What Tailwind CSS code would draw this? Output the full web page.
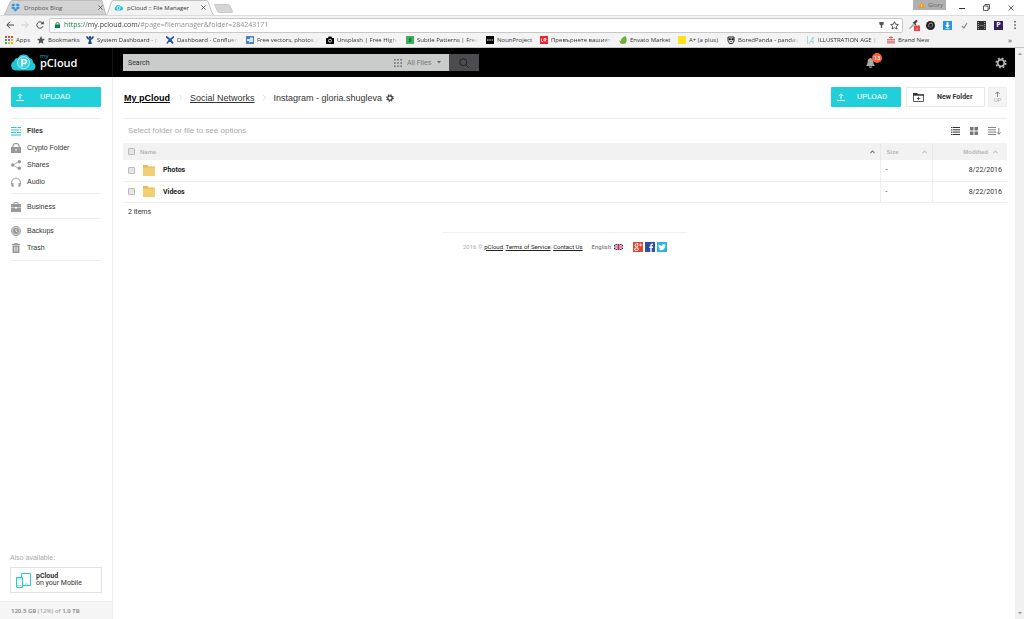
<!DOCTYPE html>
<html lang="en">
<head>
<meta charset="utf-8">
<title>pCloud :: File Manager</title>
<script src="https://cdn.jsdelivr.net/npm/@tailwindcss/browser@4"></script>
</head>
<body class="flex h-screen flex-col overflow-hidden bg-white font-['Liberation_Sans',Arial,sans-serif] text-[7px] leading-[10px] text-[#333]">

<!-- Browser chrome -->
<div class="shrink-0 font-['Open_Sans','Noto_Sans',sans-serif] text-[6px] text-[#333]">
  <div class="flex h-[15px] items-stretch pl-[4px]">
    <div class="relative flex w-[102px] items-center gap-[4px] pr-[3px] pl-[7px] text-[#555]">
      <svg class="absolute inset-0 h-full w-full" viewBox="0 0 102 15" preserveAspectRatio="none"><path d="M0 15C2 14 5 1 8 .5H98L102 15Z" fill="#d3d3d3" stroke="#aaa" stroke-width=".7"/></svg>
      <svg class="relative size-[9px]" viewBox="0 0 18 16" fill="#2a93e8"><path d="M5 0l4 3-5 3-4-3zM13 0l5 3-4 3-5-3zM0 9l4-3 5 3-4 3zM14 6l4 3-5 3-4-3zM5 13l4-3 4 3-4 3z"/></svg>
      <span class="relative flex-1">Dropbox Blog</span>
      <button aria-label="Close Dropbox Blog" class="relative"><svg class="size-[5px]" viewBox="0 0 6 6"><path d="M.5.5l5 5M5.500.5l-5 5" stroke="#555"/></svg></button>
    </div>
    <div class="relative flex w-[108px] items-center gap-[4px] pr-[8px] pl-[8px]">
      <svg class="absolute inset-0 h-full w-full" viewBox="0 0 108 15" preserveAspectRatio="none"><path d="M0 15C3 14 4 1 7 .5H101C103 1 105 14 108 15Z" fill="#f3f3f3"/><path d="M0 15C3 14 4 1 7 .5H101C103 1 105 14 108 15" fill="none" stroke="#aaa" stroke-width=".7"/></svg>
      <svg class="relative size-[9px]" viewBox="0 0 18 14"><path d="M4 13a4 4 0 0 1-1-7 6 6 0 0 1 11-1 4 4 0 0 1 0 8z" fill="#20c5d3"/><circle cx="9" cy="8" r="3" fill="none" stroke="#fff" stroke-width="1.500"/></svg>
      <span class="relative flex-1">pCloud :: File Manager</span>
      <button aria-label="Close pCloud" class="relative"><svg class="size-[5px]" viewBox="0 0 6 6"><path d="M.5.5l5 5M5.500.5l-5 5" stroke="#444"/></svg></button>
    </div>
    <button aria-label="New tab" class="mt-[4px] h-[9px] w-[19px]"><svg class="h-full w-full" viewBox="0 0 19 9"><path d="M.5 .5h14q1 0 1.500 1l2.500 6q.2 1-1 1H5q-1 0-1.500-1z" fill="#d5d5d5" stroke="#b5b5b5" stroke-width=".6"/></svg></button>
    <div class="flex-1"></div>
    <button class="mr-[13px] flex h-[10px] w-[33px] items-center gap-[3px] bg-[#b0b0b0] pl-[5px] text-[#666]">
      <svg class="h-[6px] w-[7px]" viewBox="0 0 12 11"><path d="M6 0l6 11H0z" fill="#f59a12"/><path d="M6 4v3M6 8v1.500" stroke="#fff"/></svg>Glory</button>
    <button aria-label="Minimize" class="mr-[18px]"><svg class="size-[6px]" viewBox="0 0 6 6"><path d="M0 3.500h6" stroke="#333"/></svg></button>
    <button aria-label="Restore" class="mr-[18px]"><svg class="size-[7px]" viewBox="0 0 7 7" fill="none" stroke="#333" stroke-width=".8"><path d="M.5 2h4.500v4.500H.5zM2 2V.5h4.500V5H5"/></svg></button>
    <button aria-label="Close window" class="mr-[10px]"><svg class="size-[6px]" viewBox="0 0 6 6"><path d="M.5.5l5 5M5.500.5l-5 5" stroke="#333" stroke-width=".8"/></svg></button>
  </div>

  <div class="flex h-[19px] items-center border-t border-[#ddd] bg-[#f3f3f3] pr-[8px] pl-[6px]">
    <button aria-label="Back" class="mr-[7px]"><svg class="size-[8px]" viewBox="0 0 8 8" fill="none" stroke="#444"><path d="M8 4H1M4 .7L.8 4 4 7.300"/></svg></button>
    <button aria-label="Forward" class="mr-[7px]"><svg class="size-[8px]" viewBox="0 0 8 8" fill="none" stroke="#ccc"><path d="M0 4h7M4 .7L7.200 4 4 7.300"/></svg></button>
    <button aria-label="Reload" class="mr-[5px]"><svg class="size-[8px]" viewBox="0 0 8 8" fill="none" stroke="#444"><path d="M7 5.200A3.200 3.200 0 1 1 6.300 1.800"/><path d="M7.800 0v3.300H4.500z" fill="#444" stroke="none"/></svg></button>
    <div class="flex h-[15px] flex-1 items-center rounded-[2px] border border-[#c8c8c8] bg-white pr-[3px] pl-[5px]">
      <svg class="mr-[4px] h-[6px] w-[5px]" viewBox="0 0 5 6"><path d="M0 2.500h5V6H0z" fill="#0b8043"/><path d="M1 3V1.700a1.500 1.300 0 0 1 3 0V3" fill="none" stroke="#0b8043" stroke-width=".8"/></svg>
      <input aria-label="Address" value="https://my.pcloud.com/#page=filemanager&amp;folder=284243171" class="min-w-0 flex-1 bg-[linear-gradient(90deg,#0b8043_23px,#333_23px,#333_75px,#888_75px)] bg-clip-text text-[7px] text-transparent outline-none">
      <svg class="mr-[6px] h-[6px] w-[5px]" viewBox="0 0 5 7" fill="#555"><path d="M0 0h5v2.500L3.300 4v3H1.700V4L0 2.500z"/></svg>
      <svg class="size-[9px]" viewBox="0 0 10 10"><path d="M5 .8l1.300 2.800 3 .3-2.200 2 .6 3L5 7.400 2.300 8.900l.6-3-2.200-2 3-.3z" fill="none" stroke="#444"/></svg>
    </div>
    <div class="flex items-center gap-[8px] pl-[6px]">
      <svg class="h-[12px] w-[9px] overflow-visible" viewBox="0 0 9 12"><path d="M0 9.500l4-4.500 1.200 1.200L.8 10z" fill="#999"/><path d="M3.500 3.500l3 3 .9-.9-.9-1L8.500 2.500 8 1 6.500 1.200 4.900 3z" fill="#444"/><path d="M5 6.500h6V12H5z" fill="#ec4146"/><path d="M7.300 10h1.500" stroke="#fff" stroke-width=".7"/></svg>
      <svg class="size-[9px]" viewBox="0 0 9 9"><circle cx="4.500" cy="4.500" r="4.500" fill="#222"/><path d="M2.800 3.200L5 2l1.500.7" stroke="#e8a33a" fill="none"/><path d="M6.500 3v2.500" stroke="#3aa757"/><path d="M6 6L3.500 6.500" stroke="#3b6fd8"/><path d="M2.700 6V3.500" stroke="#b45bd0"/></svg>
      <svg class="size-[9px]" viewBox="0 0 9 9"><path d="M0 0h9v9H0z" fill="#2a94df"/><path d="M3.500 1.300h2v3H7L4.500 6.800 2 4.300h1.500z" fill="#fff"/><path d="M2.500 7.600h4" stroke="#fff" stroke-width=".8"/></svg>
      <svg class="size-[9px]" viewBox="0 0 9 9"><path d="M2 5l2 2 3-5" fill="none" stroke="#888" stroke-width="1.200"/></svg>
      <svg class="size-[9px]" viewBox="0 0 9 9"><path d="M0 0h9v9H0z" fill="#333"/><path d="M1.300 1v7M7.700 1v7" stroke="#bbb" stroke-dasharray="1 1"/><path d="M2.500 4.500h4" stroke="#999" stroke-width=".6"/></svg>
      <span class="flex h-[9px] w-[9px] items-center justify-center bg-[#36205c] text-[7px] font-bold text-white">P</span>
      <button aria-label="Menu" class="pl-[3px]"><svg class="h-[8px] w-[2px]" viewBox="0 0 2 8" fill="#444"><path d="M.3 0h1.400v1.500H.3zM.3 3.200h1.400v1.500H.3zM.3 6.400h1.400v1.500H.3z"/></svg></button>
    </div>
  </div>

  <nav aria-label="Bookmarks" class="flex h-[14px] items-center overflow-hidden border-b border-[#c4c4c4] bg-[#f3f3f3] pb-[2px] pl-[5px] whitespace-nowrap">
    <a href="#" class="flex w-[32px] shrink-0 items-center gap-[3px]"><svg class="size-[8px]" viewBox="0 0 8 8"><path d="M0 0h2v2H0zM3 0h2v2H3zM6 0h2v2H6z" fill="#e5493a"/><path d="M0 3h2v2H0z" fill="#3aa757"/><path d="M3 3h2v2H3z" fill="#4285f4"/><path d="M6 3h2v2H6zM3 6h2v2H3zM6 6h2v2H6z" fill="#f4b400"/><path d="M0 6h2v2H0z" fill="#3aa757"/></svg>Apps</a>
    <a href="#" class="flex w-[49px] shrink-0 items-center gap-[3px]"><svg class="size-[8px]" viewBox="0 0 10 10"><path d="M5 0l1.500 3.400 3.500.4-2.600 2.400.7 3.600L5 8 1.900 9.800l.7-3.600L0 3.800l3.500-.4z" fill="#555"/></svg>Bookmarks</a>
    <a href="#" class="flex w-[80px] shrink-0 items-center gap-[3px]"><svg class="size-[8px]" viewBox="0 0 8 8"><circle cx="4" cy="1.600" r="1.500" fill="#234d80"/><path d="M0 .5C.5 3 2 3.500 3.200 4L2 8h4L4.800 4C6 3.500 7.500 3 8 .5L6.300.3Q6 3 4 3.300 2 3 1.700.3z" fill="#234d80"/></svg><span class="w-[61px] mask-r-from-85%">System Dashboard - p</span></a>
    <a href="#" class="flex w-[80px] shrink-0 items-center gap-[3px]"><svg class="size-[8px]" viewBox="0 0 8 8"><path d="M0 .5c2 2 4 2 7 7M8 .5C6 3 3 3 1 7.500" stroke="#23569c" stroke-width="1.800" fill="none"/></svg><span class="w-[61px] mask-r-from-85%">Dashboard - Confluen</span></a>
    <a href="#" class="flex w-[80px] shrink-0 items-center gap-[3px]"><svg class="size-[8px]" viewBox="0 0 8 8"><path d="M0 0h8v8H0z" fill="#4a82c4"/><path d="M1 5V3h3V1.500h3V6H4l-1 1V5z" fill="#d7e5f5"/></svg><span class="w-[61px] mask-r-from-85%">Free vectors, photos a</span></a>
    <a href="#" class="flex w-[80px] shrink-0 items-center gap-[3px]"><svg class="size-[8px]" viewBox="0 0 8 8"><path d="M0 2h2l.7-1.500h2.600L6 2h2v6H0z"/><circle cx="4" cy="4.700" r="1.500" fill="none" stroke="#fff" stroke-width=".8"/></svg><span class="w-[61px] mask-r-from-85%">Unsplash | Free High-</span></a>
    <a href="#" class="flex w-[80px] shrink-0 items-center gap-[3px]"><svg class="size-[8px]" viewBox="0 0 8 8"><path d="M0 0h8v8H0z" fill="#37b45b"/><path d="M5.500 2.500H3.500L3 4h2L4.500 5.500h-2" fill="none" stroke="#19592d" stroke-width=".8"/></svg><span class="w-[61px] mask-r-from-85%">Subtle Patterns | Free</span></a>
    <a href="#" class="flex w-[54px] shrink-0 items-center gap-[3px]"><svg class="size-[8px]" viewBox="0 0 8 8"><path d="M0 0h8v8H0z"/><path d="M1 4h1.500M3.300 4h1.500M5.600 4h1.500" stroke="#fff"/></svg>NounProject</a>
    <a href="#" class="flex w-[79px] shrink-0 items-center gap-[3px]"><svg class="size-[8px]" viewBox="0 0 8 8"><path d="M0 0h8v8H0z" fill="#e9242c"/><path d="M1.500 2.500v3h1.500M4 5.500v-3h2v1.500H4.500L6.300 5.500" fill="none" stroke="#fff" stroke-width=".8"/></svg><span class="w-[61px] mask-r-from-85%">Превърнете вашият</span></a>
    <a href="#" class="flex w-[59px] shrink-0 items-center gap-[3px]"><svg class="size-[8px]" viewBox="0 0 8 8"><path d="M6.500 0C9 4 7.500 8 4 8 1 8 0 6 .8 4c.3.700.5 1 .9 1.200C2 2.500 4.500.5 6.500 0z" fill="#75ac3c"/></svg>Envato Market</a>
    <a href="#" class="flex w-[49px] shrink-0 items-center gap-[3px]"><span class="size-[8px] bg-[#fbe21d]"></span>A+ (a plus)</a>
    <a href="#" class="flex w-[80px] shrink-0 items-center gap-[3px]"><svg class="size-[8px]" viewBox="0 0 8 8"><path d="M1 1h6v4L5.500 7.500h-3L1 5z" fill="#fff" stroke="#222"/><path d="M2 2.500h1.500v1.500H2zM4.800 2.500h1.500v1.500H4.800zM3 5.500h2" stroke="#222" stroke-width=".7"/></svg><span class="w-[61px] mask-r-from-85%">BoredPanda - pandas</span></a>
    <a href="#" class="flex w-[80px] shrink-0 items-center gap-[3px]"><svg class="size-[8px]" viewBox="0 0 8 8"><path d="M.5 0v8M2 8l4-7v7M3 5.500h3" fill="none" stroke="#8bc5cb" stroke-width=".7"/></svg><span class="w-[61px] mask-r-from-85%">ILLUSTRATION AGE | T</span></a>
    <a href="#" class="flex w-[60px] shrink-0 items-center gap-[3px]"><svg class="size-[8px]" viewBox="0 0 8 8" fill="none" stroke="#d8544f" stroke-width=".8"><path d="M4 0v3M2 1.500h4M0 3.500h8M1 4v4M3 4v4M5 4v4M7 4v4M0 6h8"/></svg>Brand New</a>
    <button aria-label="More bookmarks" class="mr-[12px] ml-auto text-[8px]">»</button>
  </nav>
</div>

<div class="flex min-h-0 flex-1">
  <div class="flex min-w-0 flex-1 flex-col">

    <!-- Application header -->
    <header class="flex h-[29px] shrink-0 items-center bg-black pr-[8px]">
      <a href="#" aria-label="my pCloud" class="flex h-full w-[113px] shrink-0 items-center gap-[4px] border-r border-[#151515] pl-[11px]">
        <svg class="h-[17px] w-[25px]" viewBox="0 0 25 17"><path d="M5.500 16.500a5 5 0 0 1-2.500-9.500A4 4 0 0 1 7 4 6.500 6.500 0 0 1 18.500 4 4.600 4.600 0 0 1 22 8.500a4.200 4.200 0 0 1-1 8z" fill="#1fc6d4"/><circle cx="12.500" cy="8.700" r="6" fill="#3fd0dc" stroke="#c9f4f7" stroke-width=".8"/><path d="M11 12.500V5.700h2.300a1.900 1.900 0 0 1 0 3.900H11" fill="none" stroke="#fff" stroke-width="1.500"/></svg>
        <span class="flex flex-col pb-[4px] font-['Open_Sans',sans-serif]"><span class="text-[6px] leading-[5px] text-[#1bb0bc]">my</span><span class="text-[11px] leading-[8px] font-semibold text-white">pCloud</span></span>
      </a>
      <form class="ml-[10px] flex h-[17px] w-[356px] items-stretch">
        <input aria-label="Search" placeholder="Search" class="min-w-0 flex-1 bg-[#c9cccb] px-[5px] font-['Roboto',sans-serif] text-[7px] outline-none placeholder:text-[#333]">
        <div class="flex items-center bg-[#c9cccb] pr-[8px] text-[#777]">
          <svg class="mr-[5px] size-[8px]" viewBox="0 0 8 8" fill="#666"><path d="M0 0h1.500v1.500H0zM3.200 0h1.500v1.500H3.200zM6.400 0h1.500v1.500H6.400zM0 3.200h1.500v1.500H0zM3.200 3.200h1.500v1.500H3.200zM6.400 3.200h1.500v1.500H6.400zM0 6.400h1.500v1.500H0zM3.200 6.400h1.500v1.500H3.200zM6.400 6.400h1.500v1.500H6.400z"/></svg>
          <select aria-label="File type" class="w-[30px] appearance-none font-['Roboto',sans-serif] text-[7px] outline-none"><option>All Files</option></select>
          <svg class="h-[3px] w-[4px]" viewBox="0 0 4 3"><path d="M0 0h4L2 2.500z" fill="#666"/></svg>
        </div>
        <button aria-label="Search" type="button" class="flex w-[30px] items-center justify-center bg-[#4c4c50]"><svg class="size-[10px]" viewBox="0 0 10 10" fill="none" stroke="#222"><circle cx="4.200" cy="4.200" r="3.500"/><path d="M6.800 6.800l3 3"/></svg></button>
      </form>
      <button aria-label="Notifications" class="relative mr-[120px] ml-auto"><svg class="h-[10px] w-[9px]" viewBox="0 0 9 10" fill="#aaa"><path d="M4.500 0c2 .3 2.800 1.700 2.800 3.500 0 2.200.7 3 1.700 4.500H0c1-1.500 1.700-2.300 1.700-4.500C1.700 1.700 2.500.3 4.500 0zM3 8.500h3a1.500 1.500 0 0 1-3 0z"/></svg>
        <span class="absolute -top-[5px] left-[6px] size-[10px] rounded-full bg-[#f5653c] text-center font-['Roboto',sans-serif] text-[6px] leading-[10px] text-white">13</span></button>
      <button aria-label="Settings"><svg class="size-[12px]" viewBox="0 0 12 12"><circle cx="6" cy="6" r="3.300" fill="none" stroke="#b5b5b5" stroke-width="1.800"/><circle cx="6" cy="6" r="4.800" fill="none" stroke="#b5b5b5" stroke-width="1.600" stroke-dasharray="1.900 1.870"/></svg></button>
    </header>

    <div class="flex min-h-0 flex-1">
      <!-- Sidebar -->
      <aside class="flex w-[113px] shrink-0 flex-col border-r border-[#eee]">
        <div class="pr-[11px] pl-[11px]">
          <button class="mt-[10px] flex h-[20px] w-full items-center rounded-[1px] bg-[#20cfda] pl-[5px] font-['Roboto',sans-serif] text-[8px] text-white"><svg class="mr-[16px] size-[8px]" viewBox="0 0 8 8" fill="none" stroke="#fff"><path d="M4 6V1M2 2.800L4 .8l2 2M0 7.500h8"/></svg>UPLOAD</button>
          <nav class="mt-[11px] [&_a]:flex [&_a]:h-[17px] [&_a]:items-center [&_a]:gap-[6px] [&_svg]:size-[10px]">
            <div class="border-t border-[#eee] pt-[3px] pb-[3px]">
              <a href="#" class="font-bold"><svg viewBox="0 0 10 10" stroke="#29c3ce" stroke-width="1.200"><path d="M0 1.500h5.500M0 4h8M0 6.500h5M0 9h10M6.500 1.500h3.500M8.700 4h1.300M6 6.500h4"/></svg>Files</a>
              <a href="#"><svg viewBox="0 0 10 10"><path d="M0 4h10v6H0z" fill="#999"/><path d="M2 4V2.800a3 2.300 0 0 1 6 0V4" fill="none" stroke="#999" stroke-width="1.200"/><path d="M5 6v2" stroke="#fff"/></svg>Crypto Folder</a>
              <a href="#"><svg viewBox="0 0 10 10" fill="#999"><path d="M8 1.500L2 5l6 3.500" fill="none" stroke="#999" stroke-width=".8"/><circle cx="8.300" cy="1.700" r="1.700"/><circle cx="1.700" cy="5" r="1.700"/><circle cx="8.300" cy="8.300" r="1.700"/></svg>Shares</a>
              <a href="#"><svg viewBox="0 0 10 10"><path d="M.6 7V5.500a4.400 4.400 0 0 1 8.800 0V7" fill="none" stroke="#999"/><path d="M.5 6h2v4h-1L.2 8.500zM9.500 6h-2v4h1l1.300-1.500z" fill="#999"/></svg>Audio</a>
            </div>
            <div class="border-t border-[#eee] pt-[4px] pb-[3px]">
              <a href="#"><svg viewBox="0 0 10 10"><path d="M0 2h10v3H0zM0 5.600h4v1h2v-1h4V10H0z" fill="#999"/><path d="M3 2V.6h4V2" fill="none" stroke="#999"/></svg>Business</a>
            </div>
            <div class="border-y border-[#eee] pt-[3px] pb-[4px]">
              <a href="#"><svg viewBox="0 0 10 10"><circle cx="5" cy="5" r="4.600" fill="#ccc" stroke="#999" stroke-width=".8"/><circle cx="5" cy="5" r="3" fill="#999"/><path d="M5 3v2.300l1.300.7" fill="none" stroke="#fff" stroke-width=".8"/></svg>Backups</a>
              <a href="#"><svg viewBox="0 0 10 10"><path d="M1 .8h8V2H1zM3.500 0h3v1h-3zM1.500 2.600h7V10h-7z" fill="#999"/><path d="M3.500 4v4.500M5 4v4.500M6.500 4v4.500" stroke="#fff" stroke-width=".6"/></svg>Trash</a>
            </div>
          </nav>
        </div>
        <div class="mt-auto px-[10px] pb-[8px]">
          <p class="mb-[4px] text-[#aaa]">Also available:</p>
          <a href="#" class="flex h-[26px] items-center gap-[5px] border border-[#e2e2e2] pl-[5px] font-['Roboto',sans-serif] text-[7px] leading-[7px]">
            <svg class="h-[15px] w-[15px]" viewBox="0 0 15 15" fill="#fff" stroke="#27c8d4"><path d="M5.500 .5h9v12h-9z"/><path d="M.5 4.500h6v10h-6z"/><path d="M.5 6h6M.5 12.700h6M9 11h3" stroke-width=".6"/></svg>
            <span><b>pCloud</b><br>on your Mobile</span></a>
        </div>
        <p class="flex h-[18px] items-center border-t border-[#eee] bg-[#f5f5f5] pl-[11px] font-['Noto_Sans',sans-serif] text-[6px] text-[#999]"><span><b>120.5 GB</b> (12%) of <b>1.0 TB</b></span></p>
      </aside>

      <!-- File manager -->
      <main class="min-w-0 flex-1 pt-[10px] pr-[8px] pl-[10px]">
        <div class="flex h-[20px] items-center text-[9px]">
          <nav aria-label="Folder path" class="flex items-center pt-px pl-px">
            <a href="#" class="font-bold text-black underline">My pCloud</a>
            <svg class="mr-[8px] ml-[9px] h-[5px] w-[3px]" viewBox="0 0 3 5"><path d="M.4.2L2.500 2.500.4 4.800" fill="none" stroke="#ccc" stroke-width=".7"/></svg>
            <a href="#" class="underline">Social Networks</a>
            <svg class="mx-[8px] h-[5px] w-[3px]" viewBox="0 0 3 5"><path d="M.4.2L2.500 2.500.4 4.800" fill="none" stroke="#ccc" stroke-width=".7"/></svg>
            <span>Instagram - gloria.shugleva</span>
            <button aria-label="Folder options" class="ml-[4px]"><svg class="size-[8px]" viewBox="0 0 12 12"><circle cx="6" cy="6" r="3.300" fill="none" stroke="#333" stroke-width="1.800"/><circle cx="6" cy="6" r="4.800" fill="none" stroke="#333" stroke-width="1.800" stroke-dasharray="1.900 1.870"/></svg></button>
          </nav>
          <div class="ml-auto flex items-stretch font-['Roboto',sans-serif]">
            <button class="mr-[5px] flex h-[20px] w-[70px] items-center rounded-[1px] bg-[#20cfda] pl-[6px] text-[8px] text-white"><svg class="mr-[12px] size-[8px]" viewBox="0 0 8 8" fill="none" stroke="#fff"><path d="M4 6V1M2 2.800L4 .8l2 2M0 7.500h8"/></svg>UPLOAD</button>
            <button class="mr-[3px] flex w-[79px] items-center border border-[#e8e8e8] pl-[6px] text-[7px] font-bold"><svg class="mr-[13px] h-[9px] w-[11px]" viewBox="0 0 11 9"><path d="M.5 2v6.500h10V2z" fill="none" stroke="#333" stroke-width=".8"/><path d="M0 0h4l1 1.300h6V2.500H0z" fill="#333"/><path d="M5.500 3.800v3.400M3.800 5.500h3.400" stroke="#333" stroke-width=".8"/></svg>New Folder</button>
            <button class="flex w-[19px] flex-col items-center justify-center border border-[#eee] bg-[#f4f4f4] text-[6px] leading-[6px] text-[#aaa]"><svg class="h-[6px] w-[5px]" viewBox="0 0 5 6" fill="none" stroke="#888"><path d="M2.500 6V1M.4 3l2.100-2.200L4.600 3"/></svg>UP</button>
          </div>
        </div>

        <div class="mt-[11px] flex h-[25px] items-center border-t border-[#eee] pr-[6px] pl-[5px]">
          <p class="text-[8px] text-[#aaa]">Select folder or file to see options</p>
          <div class="ml-auto flex items-center gap-[10px]">
            <button aria-label="List view"><svg class="h-[8px] w-[9px]" viewBox="0 0 9 8" stroke="#333"><path d="M0 .5h1.500M2 .5h7M0 2.800h1.500M2 2.800h7M0 5.100h1.500M2 5.100h7M0 7.500h1.500M2 7.500h7"/></svg></button>
            <button aria-label="Grid view"><svg class="h-[8px] w-[8px]" viewBox="0 0 8 8" fill="#777"><path d="M0 0h3.500v3.500H0zM4.500 0H8v3.500H4.500zM0 4.500h3.500V8H0zM4.500 4.500H8V8H4.500z"/></svg></button>
            <button aria-label="Sort"><svg class="h-[8px] w-[13px]" viewBox="0 0 13 8" fill="none" stroke="#777"><path d="M0 .5h8M0 2.800h8M0 5.100h8M0 7.500h8M10.800 1v6M9 5.300l1.800 2 1.800-2" stroke-width=".9"/></svg></button>
          </div>
        </div>

        <table class="w-full table-fixed border-collapse text-left [&_input]:block [&_input]:size-[7px] [&_input]:appearance-none [&_input]:rounded-[1px] [&_input]:border [&_input]:border-[#bbb] [&_input]:bg-[#e6e6e6]">
          <thead class="bg-[#f2f2f2] text-[6px] text-[#b5b5b5]">
            <tr class="h-[17px]">
              <th class="w-[17px] p-0 pl-[5px]"><input type="checkbox" aria-label="Select all"></th>
              <th class="p-0"><div class="flex items-center justify-between pr-[5px]">Name<svg class="h-[4px] w-[5px]" viewBox="0 0 5 4"><path d="M.4 3.300L2.500.8l2.100 2.500" fill="none" stroke="#333" stroke-width=".9"/></svg></div></th>
              <th class="w-[52px] border-l border-[#e8e8e8] p-0"><div class="flex items-center justify-between pr-[5px] pl-[6px]">Size<svg class="h-[4px] w-[5px]" viewBox="0 0 5 4"><path d="M.4 3.300L2.500.8l2.100 2.500" fill="none" stroke="#aaa" stroke-width=".9"/></svg></div></th>
              <th class="w-[75px] border-l border-[#e8e8e8] p-0"><div class="flex items-center justify-end gap-[5px] pr-[9px]">Modified<svg class="h-[4px] w-[5px]" viewBox="0 0 5 4"><path d="M.4 3.300L2.500.8l2.100 2.500" fill="none" stroke="#aaa" stroke-width=".9"/></svg></div></th>
            </tr>
          </thead>
          <tbody class="font-['Roboto',sans-serif]">
            <tr class="h-[21px] border-b border-[#eee]">
              <td class="p-0 pl-[5px]"><input type="checkbox" aria-label="Select Photos"></td>
              <td class="p-0 pl-[3px]"><a href="#" class="flex items-center gap-[8px] font-bold text-[#222]"><svg class="h-[11px] w-[12px]" viewBox="0 0 12 11"><path d="M0 0h4.500l1 1.500H12V11H0z" fill="#e5b955"/><path d="M0 2.500h12V11H0z" fill="#f3cf73"/></svg>Photos</a></td>
              <td class="border-l border-[#eee] p-0 pl-[5px]">-</td>
              <td class="border-l border-[#eee] p-0 pr-[5px] text-right">8/22/2016</td>
            </tr>
            <tr class="h-[21px] border-b border-[#eee]">
              <td class="p-0 pl-[5px]"><input type="checkbox" aria-label="Select Videos"></td>
              <td class="p-0 pl-[3px]"><a href="#" class="flex items-center gap-[8px] font-bold text-[#222]"><svg class="h-[11px] w-[12px]" viewBox="0 0 12 11"><path d="M0 0h4.500l1 1.500H12V11H0z" fill="#e5b955"/><path d="M0 2.500h12V11H0z" fill="#f3cf73"/></svg>Videos</a></td>
              <td class="border-l border-[#eee] p-0 pl-[5px]">-</td>
              <td class="border-l border-[#eee] p-0 pr-[5px] text-right">8/22/2016</td>
            </tr>
          </tbody>
        </table>
        <p class="mt-[4px] pl-[5px] font-['Roboto',sans-serif]">2 items</p>

        <footer class="mx-auto mt-[15px] flex w-[244px] items-center justify-center border-t border-[#f0f0f0] pt-[9px] font-['Roboto',sans-serif] text-[6px] text-[#aaa]">
          <span>2016 © <a href="#" class="text-[#222] underline">pCloud</a>, <a href="#" class="text-[#222] underline">Terms of Service</a>, <a href="#" class="text-[#222] underline">Contact Us</a></span>
          <button class="ml-[9px] flex items-center gap-[3px] text-[#666]">English <svg class="h-[6px] w-[9px]" viewBox="0 0 9 6"><path d="M0 0h9v6H0z" fill="#29337e"/><path d="M0 0l9 6M9 0L0 6" stroke="#fff"/><path d="M4.500 0v6M0 3h9" stroke="#fff" stroke-width="2"/><path d="M4.500 0v6M0 3h9" stroke="#d8202f" stroke-width="1.200"/></svg></button>
          <div class="ml-[10px] flex gap-[2px]">
            <a href="#" aria-label="Google Plus"><svg class="size-[10px]" viewBox="0 0 10 10"><path d="M0 0h10v10H0z" fill="#d8492f"/><circle cx="3.500" cy="3.300" r="1.500" fill="none" stroke="#fff"/><ellipse cx="3.500" cy="7.200" rx="2" ry="1.300" fill="none" stroke="#fff"/><path d="M4 1.500h1.500M4 4.700l.5 1M7.700 1.500v3M6.200 3h3" stroke="#fff" stroke-width=".8"/></svg></a>
            <a href="#" aria-label="Facebook"><svg class="size-[10px]" viewBox="0 0 10 10"><path d="M0 0h10v10H0z" fill="#2d4fa0"/><path d="M8 2.200H7.200Q6 2.200 6 3.500V10M4.300 5.300H8" fill="none" stroke="#fff" stroke-width="1.400"/></svg></a>
            <a href="#" aria-label="Twitter"><svg class="size-[10px]" viewBox="0 0 10 10"><path d="M0 0h10v10H0z" fill="#2cb3e2"/><path d="M1.500 2.300Q3 4 5 4q0-2 1.700-2 .7 0 1.100.5l1-.4-.7 1 .8-.2-.8 1C8 7 6 8.300 4 8.200q-1.500 0-2.600-.8 1.300.1 2-.6-1.100-.1-1.400-1.100h.6q-1.200-.5-1.200-1.700l.6.200Q1.200 3.400 1.500 2.300z" fill="#fff"/></svg></a>
          </div>
        </footer>
      </main>
    </div>
  </div>

  <!-- Page scrollbar -->
  <div class="flex w-[9px] shrink-0 flex-col items-center justify-between bg-[#f1f1f1] py-[4px]">
    <svg class="h-[3px] w-[4px]" viewBox="0 0 4 3"><path d="M0 3h4L2 .5z" fill="#999"/></svg>
    <svg class="h-[3px] w-[4px]" viewBox="0 0 4 3"><path d="M0 0h4L2 2.500z" fill="#999"/></svg>
  </div>
</div>
</body>
</html>
